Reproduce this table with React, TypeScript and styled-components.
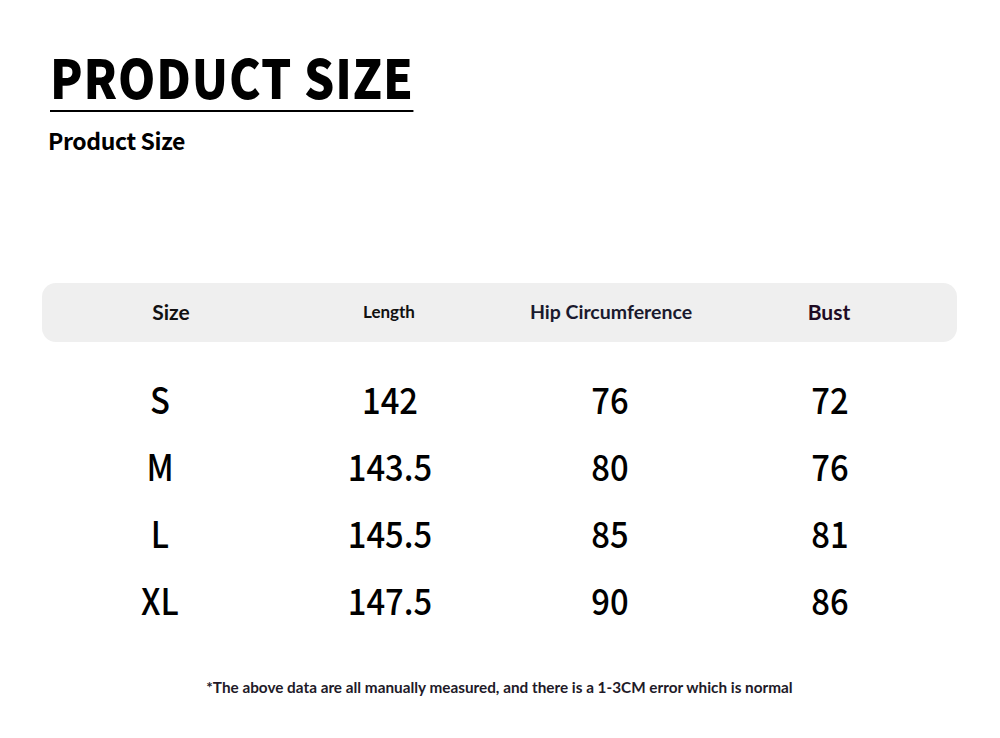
import styled, { createGlobalStyle } from "styled-components";

const GlobalStyle = createGlobalStyle`
  html, body {
    margin: 0;
    padding: 0;
    background: #ffffff;
  }
  body {
    font-family: "Noto Sans CJK SC", "Noto Sans", sans-serif;
    color: #000;
  }
`;

const Page = styled.div`
  width: 1000px;
  height: 738px;
  box-sizing: border-box;
  padding: 46px 43px 0 42px;
  display: flex;
  flex-direction: column;
`;

const Heading = styled.div`
  display: flex;
  flex-direction: column;
  align-items: flex-start;
  padding-left: 8px;
`;

// the source image is squeezed a little horizontally
const Title = styled.h1`
  margin: 0;
  font-family: "Noto Sans CJK SC", sans-serif;
  font-weight: 900;
  font-size: 54px;
  line-height: 60px;
  letter-spacing: 1px;
  color: #000;
  padding-bottom: 4px;
  border-bottom: 2px solid #000;
  transform: scaleX(0.88);
  transform-origin: left center;
`;

const Subtitle = styled.div`
  margin-top: 12px;
  margin-left: -2px;
  font-family: "Noto Sans CJK SC", sans-serif;
  font-weight: 700;
  font-size: 23px;
  line-height: 32px;
  letter-spacing: -0.4px;
`;

const HeaderBar = styled.div`
  margin-top: 127px;
  height: 59px;
  border-radius: 14px;
  background: #efefef;
  display: grid;
  grid-template-columns: 258px 178px 266px 170px;
  align-items: center;
`;

const HeadCell = styled.div<{ $size: number; $color?: string }>`
  text-align: center;
  font-family: Lato, "Liberation Sans", sans-serif;
  font-weight: 700;
  font-size: ${(p) => p.$size}px;
  color: ${(p) => p.$color || "#111"};
  margin-top: -3px;
`;

const Body = styled.div`
  margin-top: 22px;
  display: grid;
  grid-template-columns: 236px 224px 216px 224px;
  grid-auto-rows: 67px;
  align-items: center;
`;

const Cell = styled.div`
  text-align: center;
  font-family: "Noto Sans CJK SC", sans-serif;
  font-weight: 500;
  font-size: 36px;
  line-height: 40px;
  color: #000;
  transform: scaleX(0.91);
`;

const Note = styled.div`
  margin-top: 46px;
  text-align: center;
  font-family: Lato, "Liberation Sans", sans-serif;
  font-weight: 700;
  font-size: 15.3px;
  color: #221a28;
`;

const rows = [
  ["S", "142", "76", "72"],
  ["M", "143.5", "80", "76"],
  ["L", "145.5", "85", "81"],
  ["XL", "147.5", "90", "86"],
];

export default function App() {
  return (
    <>
      <GlobalStyle />
      <Page>
        <Heading>
          <Title>PRODUCT SIZE</Title>
          <Subtitle>Product Size</Subtitle>
        </Heading>
        <HeaderBar>
          <HeadCell $size={21}>Size</HeadCell>
          <HeadCell $size={17}>Length</HeadCell>
          <HeadCell $size={19.5} $color="#1a1a2e">Hip Circumference</HeadCell>
          <HeadCell $size={21} $color="#1e0b24">Bust</HeadCell>
        </HeaderBar>
        <Body>
          {rows.map((r) => r.map((v, i) => <Cell key={r[0] + i}>{v}</Cell>))}
        </Body>
        <Note>
          *The above data are all manually measured, and there is a 1-3CM error which is normal
        </Note>
      </Page>
    </>
  );
}
